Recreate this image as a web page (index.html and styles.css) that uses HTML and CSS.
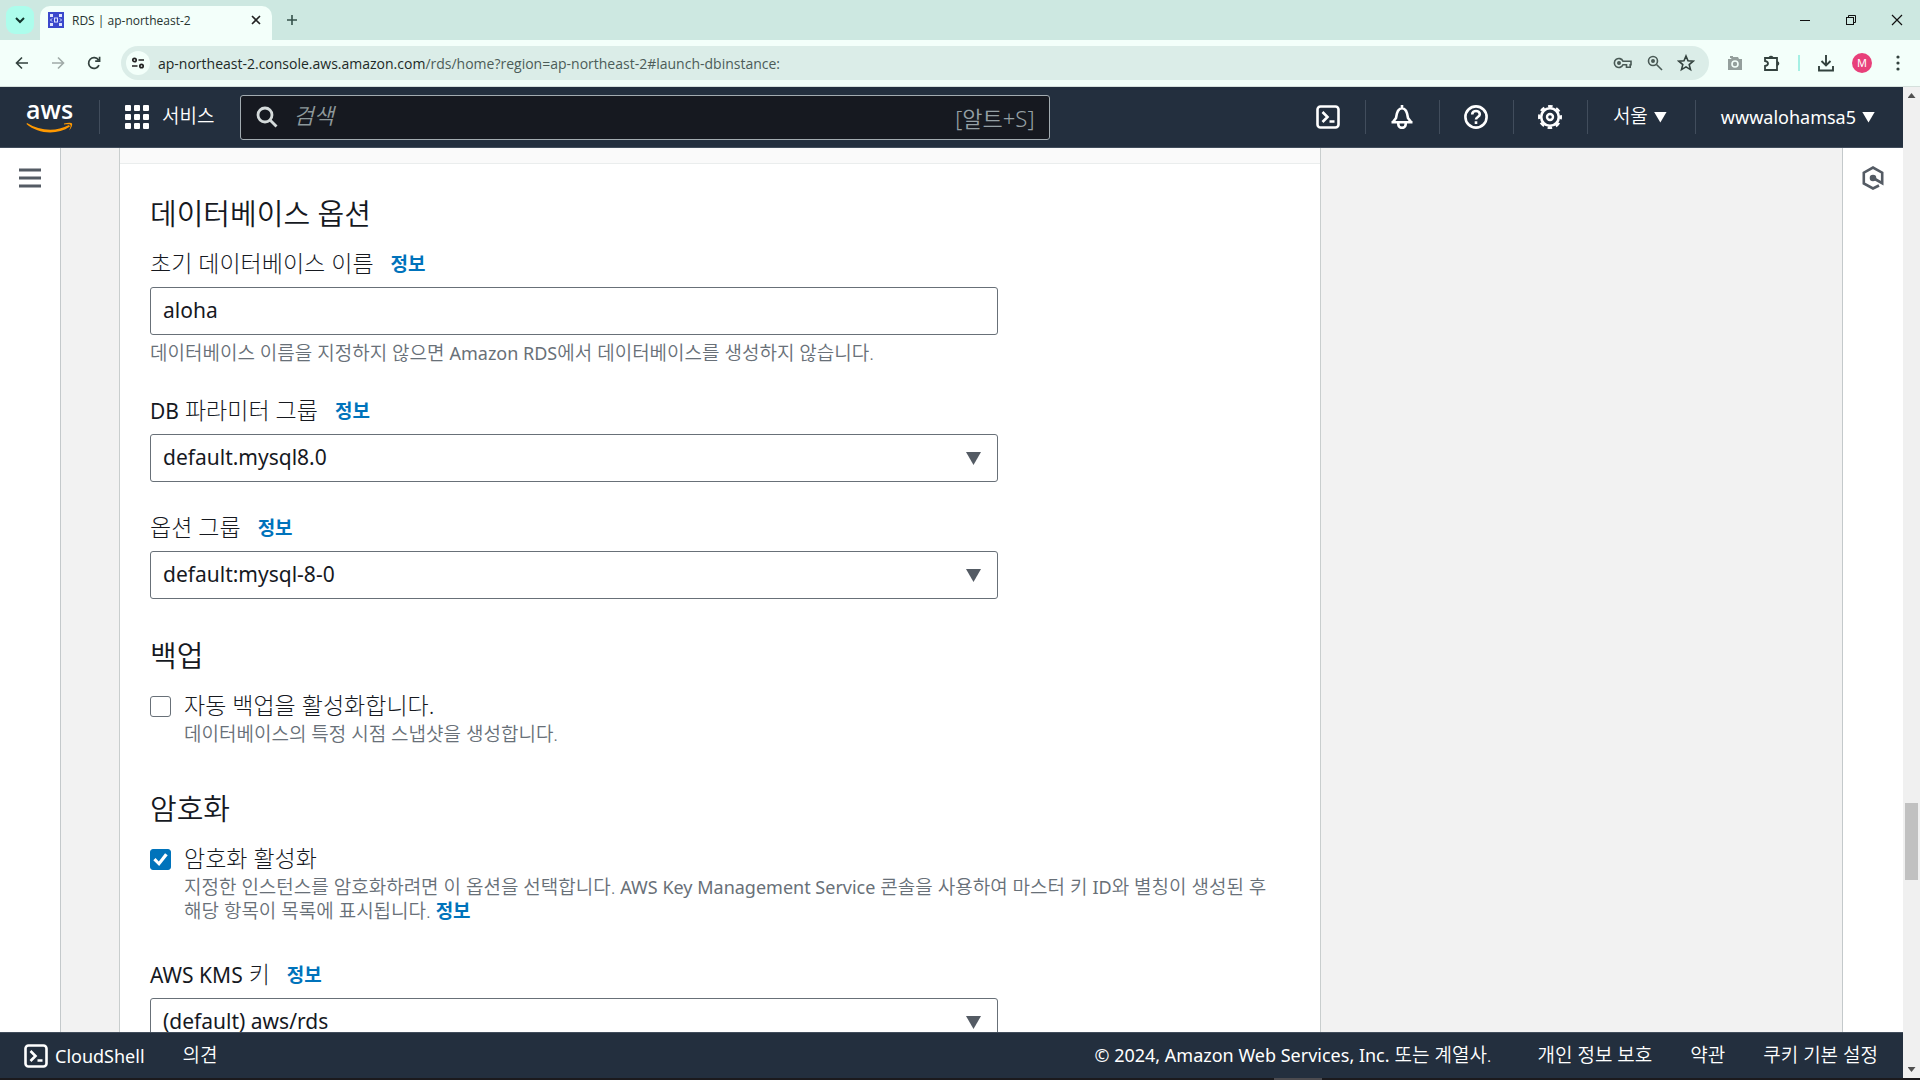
FILE: index.html
```html
<!DOCTYPE html>
<html lang="ko">
<head>
<meta charset="utf-8">
<title>RDS | ap-northeast-2</title>
<link rel="stylesheet" href="styles.css">
</head>
<body>
<div class="tabstrip">
  <button class="tab-search" aria-label="탭 검색"><svg width="12" height="12" viewBox="0 0 12 12"><path d="M2 4l4 4 4-4" fill="none" stroke="#12352c" stroke-width="2"/></svg></button>
  <div class="tab">
    <svg width="16" height="16" viewBox="0 0 16 16"><rect width="16" height="16" fill="#3b48cc"/><g fill="#dfe3ff"><rect x="2" y="2" width="3" height="3"/><rect x="11" y="2" width="3" height="3"/><rect x="2" y="11" width="3" height="3"/><rect x="11" y="11" width="3" height="3"/></g><g fill="none" stroke="#dfe3ff"><path d="M4 6.500L2.500 8 4 9.500M12 6.500L13.500 8 12 9.500"/><rect x="6.500" y="6" width="3" height="4"/></g></svg>
    <span class="tab-title">RDS | ap-northeast-2</span>
    <button aria-label="탭 닫기"><svg width="10" height="10" viewBox="0 0 10 10"><path d="M1 1l8 8M9 1L1 9" stroke="#222" stroke-width="1.600"/></svg></button>
  </div>
  <button class="new-tab" aria-label="새 탭"><svg width="12" height="12" viewBox="0 0 12 12"><path d="M6 1v10M1 6h10" stroke="#34504a" stroke-width="1.600"/></svg></button>
  <div class="window-buttons">
    <button aria-label="최소화"><svg width="12" height="12" viewBox="0 0 12 12"><path d="M1 6.500h10" stroke="#111"/></svg></button>
    <button aria-label="이전 크기로"><svg width="12" height="12" viewBox="0 0 12 12" fill="none" stroke="#111"><rect x="1.500" y="3.500" width="7" height="7"/><path d="M3.500 3.500v-2h7v7h-2"/></svg></button>
    <button aria-label="닫기"><svg width="12" height="12" viewBox="0 0 12 12"><path d="M1 1l10 10M11 1L1 11" stroke="#111" stroke-width="1.200"/></svg></button>
  </div>
</div>
<div class="toolbar">
  <button aria-label="뒤로"><svg width="14" height="14" viewBox="0 0 14 14" fill="none" stroke="#33423e" stroke-width="1.600"><path d="M13 7H2M7 1.500L1.500 7 7 12.500"/></svg></button>
  <button aria-label="앞으로"><svg width="14" height="14" viewBox="0 0 14 14" fill="none" stroke="#a0aba8" stroke-width="1.600"><path d="M1 7h11M7 1.500L12.500 7 7 12.500"/></svg></button>
  <button aria-label="새로고침"><svg width="14" height="14" viewBox="0 0 14 14" fill="none" stroke="#33423e" stroke-width="1.700"><path d="M12 9.200A5.400 5.400 0 1 1 11.500 4M12.600.800v4.400H8.200"/></svg></button>
  <div class="omnibox">
    <span class="site-info"><svg width="14" height="14" viewBox="0 0 14 14" fill="none" stroke="#222" stroke-width="1.700"><circle cx="3.500" cy="4" r="1.700"/><path d="M7.500 4H13M1 10h5.500"/><circle cx="10.500" cy="10" r="1.700"/></svg></span>
    <span class="url">ap-northeast-2.console.aws.amazon.com<span class="path">/rds/home?region=ap-northeast-2#launch-dbinstance:</span></span>
    <span class="omni-icons">
      <svg width="20" height="14" viewBox="0 0 20 14" fill="none" stroke="#4a5a56" stroke-width="1.600"><path d="M10 5.200A4.500 4.500 0 1 0 10 8.800h3.500v2.400h3.700V8.800H18V5.200z"/><circle cx="6" cy="7" r="1.200" fill="#4a5a56"/></svg>
      <svg width="16" height="16" viewBox="0 0 16 16" fill="none" stroke="#4a5a56" stroke-width="1.600"><circle cx="6" cy="6" r="4.500"/><path d="M9.500 9.500L15 15"/><circle cx="6" cy="6" r="1.200" fill="#4a5a56"/></svg>
      <svg width="18" height="18" viewBox="0 0 18 18" fill="none" stroke="#33423e" stroke-width="1.600"><path d="M9 2l2 4.800 5.200.4-4 3.400 1.300 5L9 12.900l-4.500 2.700 1.300-5-4-3.400L7 6.800z"/></svg>
    </span>
  </div>
  <div class="ext-icons">
    <svg class="camera" width="16" height="16" viewBox="0 0 16 16"><path d="M1 4h3l1-2h6l1 2h3v11H1zM3 1h3v2H3z" fill="#949f9c"/><circle cx="8" cy="9" r="3" fill="none" stroke="#f3fffa" stroke-width="1.600"/></svg>
    <svg width="18" height="18" viewBox="0 0 18 18" fill="none" stroke="#33423e" stroke-width="1.800"><path d="M2 4h12v12H2v-4q3-.5 3-2.500T2 7z"/><path d="M6.500 3.500a1.700 1.700 0 0 1 3 0zM14.500 8a1.700 1.700 0 0 1 0 3z" fill="#33423e"/></svg>
    <span class="ext-divider"></span>
    <svg width="18" height="18" viewBox="0 0 18 18" fill="none" stroke="#33423e" stroke-width="1.900"><path d="M9 1v10M4.500 7L9 11.500 13.500 7M2 12v4.500h14V12"/></svg>
    <span class="avatar">M</span>
    <svg class="more" width="4" height="16" viewBox="0 0 4 16" fill="#33423e"><circle cx="2" cy="2" r="1.600"/><circle cx="2" cy="8" r="1.600"/><circle cx="2" cy="14" r="1.600"/></svg>
  </div>
</div>
<div class="viewport">
  <div class="page">
    <header class="aws-header">
      <a class="logo" href="#" aria-label="aws"><span>aws</span><svg width="48" height="12" viewBox="0 0 48 12"><path d="M1 1c13 8 29 9 42 2l1 1.500C31 13.500 12 12 .500 2z" fill="#f90"/><path d="M38 1.500c4-1.200 7-1 8-.2.700 1.500-.5 5-2.800 7.200 1-3 1.800-5 1.200-5.600-.6-.700-3-.6-6.400-.3z" fill="#f90"/></svg></a>
      <button class="services"><svg width="24" height="24" viewBox="0 0 24 24" fill="#fff"><rect width="6" height="6" rx="1"/><rect x="9" width="6" height="6" rx="1"/><rect x="18" width="6" height="6" rx="1"/><rect y="9" width="6" height="6" rx="1"/><rect x="9" y="9" width="6" height="6" rx="1"/><rect x="18" y="9" width="6" height="6" rx="1"/><rect y="18" width="6" height="6" rx="1"/><rect x="9" y="18" width="6" height="6" rx="1"/><rect x="18" y="18" width="6" height="6" rx="1"/></svg><span class="ko">서비스</span></button>
      <div class="search">
        <svg width="22" height="22" viewBox="0 0 22 22" fill="none" stroke="#d5dbdb" stroke-width="2.800"><circle cx="9" cy="9" r="7"/><path d="M14 14l6.500 6.500"/></svg>
        <input type="search" aria-label="검색" placeholder="검색">
        <span class="shortcut">[알트+S]</span>
      </div>
      <nav class="aws-nav">
        <button aria-label="CloudShell"><svg width="24" height="24" viewBox="0 0 24 24" fill="none" stroke="#fff" stroke-width="2.600"><rect x="1.500" y="1.500" width="21" height="21" rx="3"/><path d="M6.500 7l5 5-5 5M13.500 16.500h5"/></svg></button>
        <button aria-label="알림"><svg width="24" height="24" viewBox="0 0 24 24" fill="none" stroke="#fff" stroke-width="2.600"><path d="M12 0v3M1.500 17.200h21M3 17l3-4C6.800 6.500 8.600 3.200 12 3.200s5.200 3.300 6 9.800l3 4M8.300 18v1.200a3.700 3.700 0 0 0 7.400 0V18"/></svg></button>
        <button aria-label="도움말"><svg width="24" height="24" viewBox="0 0 24 24" fill="none" stroke="#fff" stroke-width="2.600"><circle cx="12" cy="12" r="10.600"/><path d="M8.200 9.500C8.200 4.800 15.800 5 15.800 9.300c0 2.700-3.800 2.700-3.800 5.200M12 16.300v2.700"/></svg></button>
        <button aria-label="설정"><svg width="24" height="24" viewBox="0 0 24 24" fill="none" stroke="#fff"><circle cx="12" cy="12" r="8.800" stroke-width="2.600"/><circle cx="12" cy="12" r="10.800" stroke-width="2.400" stroke-dasharray="4.600 3.882" stroke-dashoffset="2.300"/><circle cx="12" cy="12" r="3" stroke-width="2.400"/></svg></button>
        <button class="wide"><span class="ko">서울</span><span class="caret"></span></button>
        <button class="wide">wwwalohamsa5<span class="caret"></span></button>
      </nav>
    </header>
    <div class="body">
      <aside class="rail left"><button aria-label="메뉴"><svg width="22" height="20" viewBox="0 0 22 20"><path d="M0 2h22M0 10h22M0 18h22" stroke="#545b64" stroke-width="3"/></svg></button></aside>
      <main class="content">
        <div class="panel">
          <div class="panel-top"></div>
          <form class="form">
            <section>
              <h3>데이터베이스 옵션</h3>
              <div class="field">
                <div class="label-row"><label for="dbname">초기 데이터베이스 이름</label><a href="#">정보</a></div>
                <input class="control" id="dbname" type="text" value="aloha">
                <p class="hint">데이터베이스 이름을 지정하지 않으면 <span lang="en">Amazon RDS</span>에서 데이터베이스를 생성하지 않습니다.</p>
              </div>
              <div class="field">
                <div class="label-row"><label for="param"><span lang="en">DB</span> 파라미터 그룹</label><a href="#">정보</a></div>
                <div class="select"><select class="control" id="param"><option>default.mysql8.0</option></select><span class="caret"></span></div>
              </div>
              <div class="field">
                <div class="label-row"><label for="optgroup">옵션 그룹</label><a href="#">정보</a></div>
                <div class="select"><select class="control" id="optgroup"><option>default:mysql-8-0</option></select><span class="caret"></span></div>
              </div>
            </section>
            <section>
              <h3>백업</h3>
              <div class="check">
                <input type="checkbox" id="backup">
                <div><label for="backup">자동 백업을 활성화합니다.</label><p class="hint">데이터베이스의 특정 시점 스냅샷을 생성합니다.</p></div>
              </div>
            </section>
            <section>
              <h3>암호화</h3>
              <div class="check">
                <input type="checkbox" id="encrypt" checked>
                <div><label for="encrypt">암호화 활성화</label><p class="hint">지정한 인스턴스를 암호화하려면 이 옵션을 선택합니다. <span lang="en">AWS Key Management Service</span> 콘솔을 사용하여 마스터 키 <span lang="en">ID</span>와 별칭이 생성된 후 해당 항목이 목록에 표시됩니다. <a href="#">정보</a></p></div>
              </div>
              <div class="field">
                <div class="label-row"><label for="kms"><span lang="en">AWS KMS</span> 키</label><a href="#">정보</a></div>
                <div class="select"><select class="control" id="kms"><option>(default) aws/rds</option></select><span class="caret"></span></div>
              </div>
            </section>
          </form>
        </div>
      </main>
      <aside class="rail right"><button aria-label="도구"><svg width="22" height="24" viewBox="0 0 22 24" fill="none" stroke="#545b64" stroke-width="2.600"><path d="M17 19.500l-6 3L1.800 17.500V6.700L11 1.500l9.200 5.200V17.200L12 12.500"/><circle cx="11" cy="12" r="2" fill="#545b64"/></svg></button></aside>
    </div>
    <footer class="aws-footer">
      <button class="shell"><svg width="24" height="24" viewBox="0 0 24 24" fill="none" stroke="#fff" stroke-width="2.600"><rect x="1.500" y="1.500" width="21" height="21" rx="3"/><path d="M6.500 7l5 5-5 5M13.500 16.500h5"/></svg>CloudShell</button>
      <a class="ko" href="#">의견</a>
      <span class="copyright ko"><span lang="en">© 2024, Amazon Web Services, Inc.</span> 또는 계열사.</span>
      <a class="ko" href="#">개인 정보 보호</a>
      <a class="ko" href="#">약관</a>
      <a class="ko" href="#">쿠키 기본 설정</a>
    </footer>
  </div>
  <div class="scrollbar">
    <span class="arrow up"></span>
    <span class="thumb"></span>
    <span class="arrow down"></span>
  </div>
</div>
<div class="taskbar-edge"><span></span></div>
</body>
</html>
```
FILE: styles.css
```css
* { box-sizing: border-box; }
body {
  margin: 0;
  height: 100vh;
  display: flex;
  flex-direction: column;
  overflow: hidden;
  font-family: "Noto Sans", "Noto Sans CJK KR", sans-serif;
  font-size: 20px;
  color: #16191f;
}
button, input, select { font: inherit; color: inherit; }
button { padding: 0; border: 0; background: none; display: flex; align-items: center; }
svg { display: block; flex: none; }
a { color: #0073bb; text-decoration: none; }
p, h3 { margin: 0; }

/* browser chrome */
.tabstrip { flex: none; height: 40px; padding: 6px 17px 0 6px; display: flex; background: #cde8e1; }
.tab-search { width: 28px; height: 28px; border-radius: 9px; background: #adfdec; justify-content: center; }
.tab { width: 232px; margin-left: 6px; padding: 0 11px 6px 8px; display: flex; align-items: center; gap: 8px; background: #f3fffa; border-radius: 10px 10px 0 0; }
.tab-title { flex: 1; font-family: "Open Sans", sans-serif; font-size: 12px; color: #26332f; }
.new-tab { height: 28px; margin-left: 14px; }
.window-buttons { margin-left: auto; height: 28px; display: flex; gap: 34px; }
.toolbar { flex: none; height: 47px; padding: 0 20px 0 15px; display: flex; align-items: center; background: #f3fffa; border-bottom: 1px solid #d5e0dc; gap: 22px; }
.omnibox { flex: 1; height: 34px; margin-left: -2px; padding: 0 14px 0 5px; display: flex; align-items: center; border-radius: 17px; background: #dbede8; }
.site-info { width: 24px; height: 24px; border-radius: 50%; background: #f3fffa; display: flex; align-items: center; justify-content: center; }
.url { margin-left: 8px; font-family: "Open Sans", sans-serif; font-size: 14px; color: #1d2926; }
.path { color: #4c5c58; }
.omni-icons { margin-left: auto; display: flex; align-items: center; gap: 14px; }
.ext-icons { display: flex; align-items: center; gap: 17px; margin-left: -4px; }
.camera { margin-right: 3px; }
.more { margin-left: 7px; }
.ext-divider { width: 2px; height: 16px; background: #a5f0e4; }
.avatar { width: 20px; height: 20px; border-radius: 50%; background: #e8407a; color: #fff; font-size: 11px; line-height: 20px; text-align: center; }

/* page area */
.viewport { flex: 1; min-height: 0; display: flex; }
.page { flex: 1; min-width: 0; display: flex; flex-direction: column; }
.aws-header { flex: none; height: 61px; padding-left: 26px; display: flex; align-items: center; background: #232f3e; border-bottom: 1px solid #414d5c; color: #fff; }
.ko { font-size: 19px; font-weight: 350; padding-bottom: 4px; }
.logo { width: 74px; height: 34px; border-right: 1px solid #414d5c; color: #fff; }
.logo span { display: block; height: 22px; line-height: 18px; font-family: "Open Sans", sans-serif; font-size: 25px; font-weight: 600; }
.services { margin-left: 25px; gap: 13px; }
.search { width: 810px; height: 45px; margin-left: 26px; padding: 0 15px; display: flex; align-items: center; gap: 15px; background: #161920; border: 1px solid #a2abb0; border-radius: 3px; }
.search input { flex: 1; min-width: 0; padding: 0 0 4px; border: 0; outline: 0; background: none; font-size: 22px; }
.search input::placeholder { color: #8d989b; font-style: italic; font-weight: 350; opacity: 1; }
.shortcut { color: #95a0a5; font-size: 22px; font-weight: 350; }
.aws-nav { margin-left: auto; height: 34px; display: flex; }
.aws-nav button { padding: 0 25px 0 24px; border-right: 1px solid #414d5c; font-size: 18px; gap: 6px; }
.aws-nav button.wide { padding: 0 28px 0 25px; }
.aws-nav button:last-child { border-right: 0; }
.caret { width: 13px; height: 11px; background: currentColor; clip-path: polygon(0 0, 100% 0, 50% 100%); }

.body { flex: 1; min-height: 0; display: flex; background: #f2f2f2; overflow: hidden; }
.rail { flex: none; width: 61px; padding-top: 18px; background: #fff; }
.rail button { margin: 0 auto; height: 24px; }
.left { border-right: 1px solid #c4c9cb; }
.right { border-left: 1px solid #c4c9cb; }
.content { flex: 1; min-width: 0; padding: 0 58px; }
.panel { max-width: 1202px; background: #fff; border: 1px solid #c9cece; border-width: 0 1px; }
.panel-top { height: 16px; background: #fafafa; border-bottom: 1px solid #eaeded; }
.form { padding: 30px; display: flex; flex-direction: column; gap: 37px; word-break: keep-all; }
h3 { margin-bottom: 14px; font-size: 29px; font-weight: 350; line-height: 40px; }
[lang="en"] { font-weight: 400; }
.field { max-width: 848px; }
.field + .field, .check + .field { margin-top: 30px; }
.label-row { display: flex; align-items: center; gap: 17px; height: 30px; margin-bottom: 9px; }
.label-row label, .check label { font-size: 23px; font-weight: 300; line-height: 30px; }
label [lang="en"] { font-size: 21px; }
.label-row a, .hint a { font-size: 19px; font-weight: 700; }
.control { display: block; width: 100%; height: 48px; padding: 0 12px 2px; border: 1px solid #687078; border-radius: 3px; background: #fff; font-size: 21px; }
.select { position: relative; }
.select select { appearance: none; }
.select .caret { position: absolute; right: 17px; top: 18px; width: 15px; height: 13px; background: #545b64; pointer-events: none; }
.hint { padding-top: 6px; font-size: 19px; font-weight: 350; line-height: 24px; color: #687078; }
.hint [lang="en"] { font-size: 18px; }
.check { display: flex; gap: 13px; padding-bottom: 6px; }
.check .hint { padding-top: 2px; }
.check input { appearance: none; flex: none; width: 21px; height: 21px; margin: 6px 0 0; border: 1px solid #687078; border-radius: 3px; }
.check input:checked { background: #0073bb; border-color: #0073bb; }
.check input:checked::before { content: ""; display: block; width: 19px; height: 19px; background: #fff; clip-path: polygon(12% 54%, 24% 42%, 41% 60%, 74% 17%, 88% 28%, 43% 84%); }
.check label { display: block; }

.aws-footer { flex: none; height: 46px; padding: 0 25px 0 24px; display: flex; align-items: center; gap: 38px; background: #232f3e; border-top: 1px solid #414d5c; color: #fff; }
.aws-footer a { color: #fff; }
.shell { gap: 7px; font-size: 18px; }
.copyright { margin: 0 8px 0 auto; }
.copyright [lang="en"] { font-size: 18px; }

.scrollbar { flex: none; width: 17px; padding: 6px 2px; display: flex; flex-direction: column; align-items: center; background: #f0f0f0; }
.arrow { width: 8px; height: 5px; background: #505050; }
.up { clip-path: polygon(50% 0, 100% 100%, 0 100%); }
.down { margin-top: auto; clip-path: polygon(0 0, 100% 0, 50% 100%); }
.thumb { width: 13px; height: 77px; margin-top: 705px; background: #c1c1c1; }
.taskbar-edge { flex: none; height: 2px; background: #1b1a1d; display: flex; }
.taskbar-edge span { width: 48px; margin-left: 1274px; background: #4c4b4f; }
```
